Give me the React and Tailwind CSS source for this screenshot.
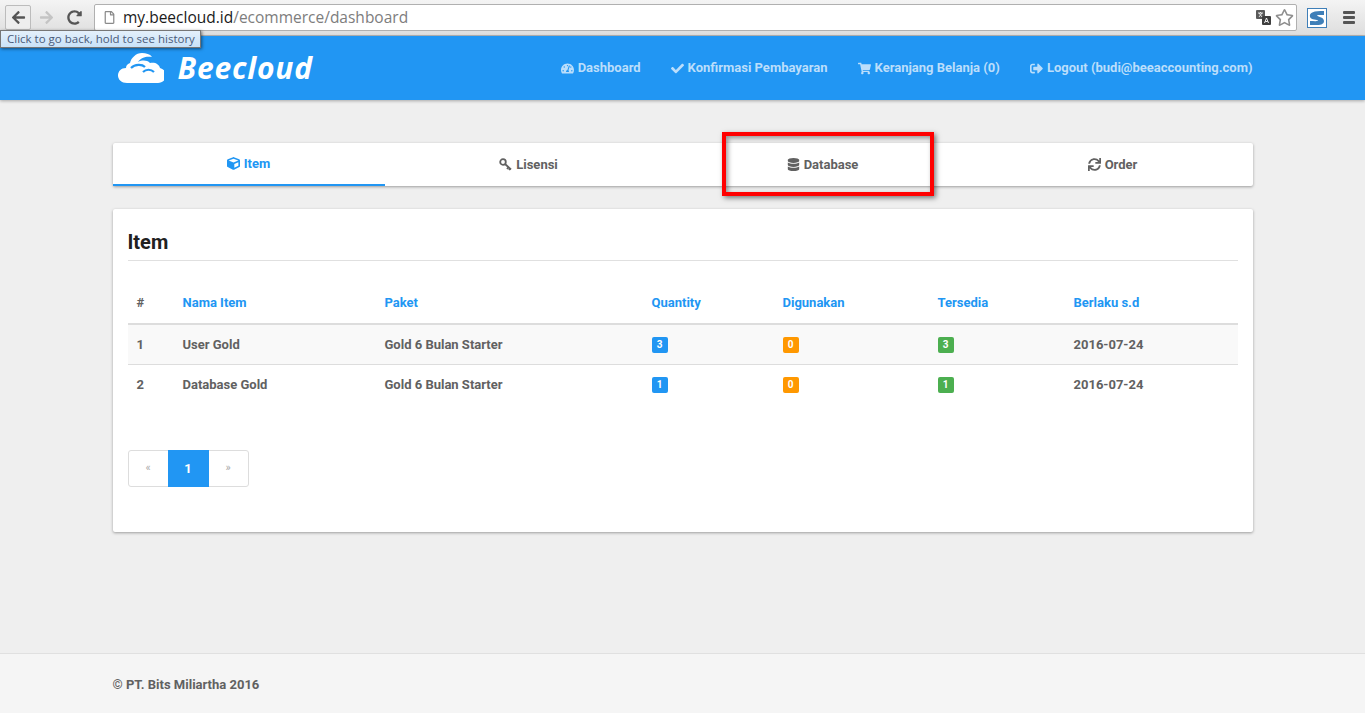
import React from 'react';
import { FaArrowLeft, FaArrowRight, FaRedoAlt, FaRegFile, FaRegStar, FaTachometerAlt, FaCheck, FaShoppingCart, FaSignOutAlt, FaCube, FaDatabase, FaSync } from 'react-icons/fa';

function KeyIcon({ className }) {
  return (
    <svg className={className} width="13" height="13" viewBox="0 0 13 13" fill="none" stroke="currentColor" strokeWidth="1.800">
      <circle cx="4" cy="4" r="2.800" />
      <path d="M6 6l6 5.500M9.500 9.200l-1.500 1.800M11 10.500l-1 1.500" />
    </svg>
  );
}

const navLinks = [
  { icon: FaTachometerAlt, label: 'Dashboard' },
  { icon: FaCheck, label: 'Konfirmasi Pembayaran' },
  { icon: FaShoppingCart, label: 'Keranjang Belanja (0)' },
  { icon: FaSignOutAlt, label: 'Logout (budi@beeaccounting.com)' },
];

const tabs = [
  { icon: FaCube, label: 'Item', active: true },
  { icon: KeyIcon, label: 'Lisensi' },
  { icon: FaDatabase, label: 'Database' },
  { icon: FaSync, label: 'Order' },
];

const rows = [
  { no: 1, name: 'User Gold', paket: 'Gold 6 Bulan Starter', qty: 3, used: 0, free: 3, until: '2016-07-24' },
  { no: 2, name: 'Database Gold', paket: 'Gold 6 Bulan Starter', qty: 1, used: 0, free: 1, until: '2016-07-24' },
];

function Badge({ className, children }) {
  return (
    <span className={`inline-flex h-4 w-4 items-center justify-center rounded-[2px] text-[10px] font-bold leading-none text-white align-middle ${className}`}>
      {children}
    </span>
  );
}

function BrowserBar() {
  return (
    <div className="flex h-9 shrink-0 items-center bg-gradient-to-b from-[#f4f4f4] to-[#dedede] border-b border-[#b5b5b5] font-[Open_Sans,sans-serif] font-normal">
      <div className="ml-[5px] flex h-[25px] w-[26px] items-center justify-center rounded-[2px] border border-[#bcbcbc] bg-[#eeeeee]">
        <FaArrowLeft className="text-[15px] text-[#555555]" />
      </div>
      <div className="ml-[6px] flex w-[18px] justify-center">
        <FaArrowRight className="text-[15px] text-[#c4c4c4]" />
      </div>
      <div className="ml-[10px] flex w-[18px] justify-center">
        <FaRedoAlt className="text-[15px] text-[#555555]" />
      </div>
      <div className="ml-[11px] flex h-[27px] w-[1203px] items-center rounded-[2px] border border-[#b0b0b0] bg-white pl-[8px] pr-[2px]">
        <FaRegFile className="text-[13px] text-[#8a8a8a]" />
        <span className="ml-[7px] text-[15.500px] leading-none text-[#1a1a1a]">
          my.beecloud.id<span className="text-[#7d7d7d]">/ecommerce/dashboard</span>
        </span>
        <div className="ml-auto flex items-center gap-[4px]">
          <svg width="15" height="15" viewBox="0 0 15 15">
            <rect x="0" y="0" width="9" height="9" rx="1" fill="#5a5a5a" />
            <rect x="6" y="6" width="9" height="9" rx="1" fill="#3f3f3f" />
            <path d="M2 3h5M4.500 2v1M3 7l3-4M3 3l3 4" stroke="#fff" strokeWidth="0.800" fill="none" />
            <path d="M8.500 13l2-5 2 5M9.300 11.500h2.400" stroke="#fff" strokeWidth="0.900" fill="none" />
          </svg>
          <FaRegStar className="text-[19px] text-[#8f8f8f]" />
        </div>
      </div>
      <svg className="ml-[10px]" width="20" height="20" viewBox="0 0 20 20">
        <rect x="0.500" y="0.500" width="19" height="19" fill="#ffffff" stroke="#3f7fb8" />
        <path d="M3 9C2 4 7 3 17 3v4c-4 0-7-.5-7 .5S17 9 17 13c0 5-8 4-14 4v-4c4 0 8 .5 8-.5S4 12 3 9z" fill="#3f7fb8" />
      </svg>
      <svg className="ml-[16px]" width="12" height="13" viewBox="0 0 12 13" fill="#555555">
        <rect y="0" width="12" height="3" rx="1" />
        <rect y="5" width="12" height="3" rx="1" />
        <rect y="10" width="12" height="3" rx="1" />
      </svg>
    </div>
  );
}

export default function App() {
  return (
    <div className="relative flex h-[713px] flex-col overflow-hidden bg-[#efefef] font-[Roboto,sans-serif] text-[13px] font-bold text-[#616161]">
      <BrowserBar />

      <header className="flex h-16 shrink-0 justify-center bg-[#2196f3] shadow-[0_1px_3px_rgba(0,0,0,0.3)]">
        <div className="flex w-[1140px] items-center justify-between">
          <div className="flex items-center pl-[5px]">
            <svg width="46" height="31" viewBox="0 0 46 31">
              <path d="M9 30C3.500 30 0 26.500 0 22.500S3 15 8 15c0-3 2-4 4-5 1-5 6-10 12-10 4 0 8 1 10 4-5-1-11 0-14 5 4-2 9-2 12 1 5-1 9 1 10 5 4 1 6 4 6 8s-4 7-8 7z" fill="#ffffff" />
              <path d="M13 15c4-4 11-4 14-1M25 19c3-3 8-3 11 0" stroke="#2196f3" strokeWidth="2.200" fill="none" />
            </svg>
            <span className="ml-[14px] font-[Open_Sans,sans-serif] text-[30px] font-bold italic leading-none tracking-[0.8px] text-white">Beecloud</span>
          </div>
          <nav className="flex items-center gap-[30px] text-[#bbdefb]">
            {navLinks.map(({ icon: Icon, label }) => (
              <a key={label} className="flex items-center gap-[4px]">
                <Icon className="text-[13px]" />
                {label}
              </a>
            ))}
          </nav>
        </div>
      </header>

      <main className="flex flex-1 flex-col items-center pt-[43px]">
        <div className="grid h-[43px] w-[1140px] grid-cols-[272px_288px_300px_280px] rounded-[2px] bg-white shadow-[0_1px_3px_rgba(0,0,0,0.35)]">
          {tabs.map(({ icon: Icon, label, active }) => (
            <div
              key={label}
              className={`flex items-center justify-center gap-[4px] ${active ? 'border-b-2 border-[#2196f3] text-[#2196f3]' : ''}`}
            >
              <Icon className="text-[13px]" />
              {label}
            </div>
          ))}
        </div>

        <section className="mt-[23px] h-[323px] w-[1140px] rounded-[2px] bg-white px-[15px] pt-[20px] shadow-[0_1px_3px_rgba(0,0,0,0.35)]">
          <h2 className="border-b border-[#e0e0e0] pb-[5px] text-[20px] font-bold leading-[26px] text-[#212121]">Item</h2>

          <table className="mt-[22px] w-[1110px] table-fixed border-collapse text-left">
            <colgroup>
              <col className="w-[46px]" />
              <col className="w-[202px]" />
              <col className="w-[267px]" />
              <col className="w-[131px]" />
              <col className="w-[155px]" />
              <col className="w-[136px]" />
              <col className="w-[173px]" />
            </colgroup>
            <thead>
              <tr className="h-[41px] border-b-2 border-[#dddddd] text-[#2196f3]">
                <th className="px-[9px] font-bold text-[#616161]">#</th>
                <th className="px-[9px] font-bold">Nama Item</th>
                <th className="px-[9px] font-bold">Paket</th>
                <th className="px-[9px] font-bold">Quantity</th>
                <th className="px-[9px] font-bold">Digunakan</th>
                <th className="px-[9px] font-bold">Tersedia</th>
                <th className="px-[9px] font-bold">Berlaku s.d</th>
              </tr>
            </thead>
            <tbody>
              {rows.map((r, i) => (
                <tr key={r.no} className={`h-10 ${i === 0 ? 'border-b border-[#dddddd] bg-[#f9f9f9]' : ''}`}>
                  <td className="px-[9px]">{r.no}</td>
                  <td className="px-[9px]">{r.name}</td>
                  <td className="px-[9px]">{r.paket}</td>
                  <td className="px-[9px]"><Badge className="bg-[#2196f3]">{r.qty}</Badge></td>
                  <td className="px-[9px]"><Badge className="bg-[#ff9800]">{r.used}</Badge></td>
                  <td className="px-[9px]"><Badge className="bg-[#4caf50]">{r.free}</Badge></td>
                  <td className="px-[9px]">{r.until}</td>
                </tr>
              ))}
            </tbody>
          </table>

          <div className="mt-[46px] flex h-[37px] w-[121px] rounded-[3px] border border-[#dddddd]">
            <span className="flex w-[39px] items-center justify-center text-[11px] font-normal text-[#aaaaaa]">«</span>
            <span className="-my-px flex w-[41px] items-center justify-center bg-[#2196f3] text-white">1</span>
            <span className="flex w-[39px] items-center justify-center text-[11px] font-normal text-[#aaaaaa]">»</span>
          </div>
        </section>
      </main>

      <footer className="flex h-[60px] shrink-0 items-center justify-center border-t border-[#e0e0e0] bg-[#f5f5f5] pt-[3px]">
        <div className="w-[1140px]">© PT. Bits Miliartha 2016</div>
      </footer>

      {/* tooltip + annotation lie over the page */}
      <div className="absolute left-0 top-[30px] flex h-[18px] w-[201px] items-center border border-[#767676] bg-gradient-to-b from-[#e4f0fb] to-[#c9e2f8] pl-[6px] font-[Open_Sans,sans-serif] text-[11.500px] font-normal text-[#4a5a78] shadow-[1px_1px_3px_rgba(0,0,0,0.5)]">
        Click to go back, hold to see history
      </div>
      <div className="absolute left-[722px] top-[132px] h-[64px] w-[212px] border-[4px] border-[#ff0000] shadow-[2px_2px_5px_rgba(0,0,0,0.5),inset_2px_2px_5px_rgba(0,0,0,0.4)]" />
    </div>
  );
}
